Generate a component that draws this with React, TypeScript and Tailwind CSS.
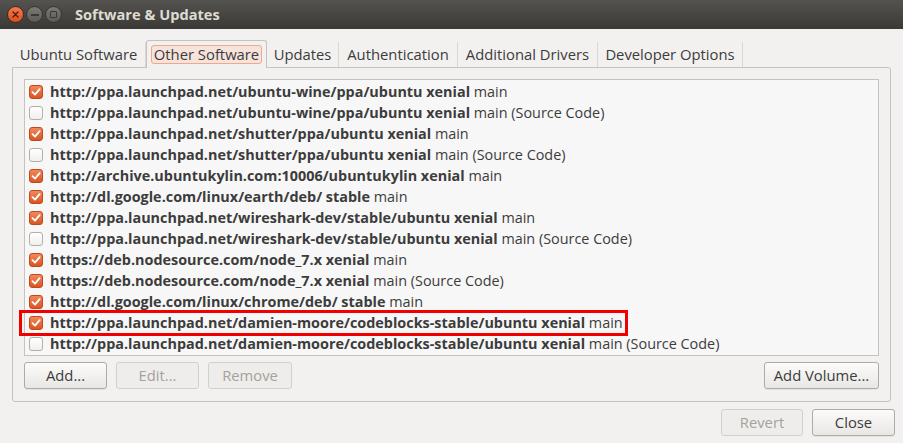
import React from 'react';

const sources: { url: string; extra: string; on: boolean; mark?: boolean }[] = [
  { url: 'http://ppa.launchpad.net/ubuntu-wine/ppa/ubuntu xenial', extra: 'main', on: true },
  { url: 'http://ppa.launchpad.net/ubuntu-wine/ppa/ubuntu xenial', extra: 'main (Source Code)', on: false },
  { url: 'http://ppa.launchpad.net/shutter/ppa/ubuntu xenial', extra: 'main', on: true },
  { url: 'http://ppa.launchpad.net/shutter/ppa/ubuntu xenial', extra: 'main (Source Code)', on: false },
  { url: 'http://archive.ubuntukylin.com:10006/ubuntukylin xenial', extra: 'main', on: true },
  { url: 'http://dl.google.com/linux/earth/deb/ stable', extra: 'main', on: true },
  { url: 'http://ppa.launchpad.net/wireshark-dev/stable/ubuntu xenial', extra: 'main', on: true },
  { url: 'http://ppa.launchpad.net/wireshark-dev/stable/ubuntu xenial', extra: 'main (Source Code)', on: false },
  { url: 'https://deb.nodesource.com/node_7.x xenial', extra: 'main', on: true },
  { url: 'https://deb.nodesource.com/node_7.x xenial', extra: 'main (Source Code)', on: true },
  { url: 'http://dl.google.com/linux/chrome/deb/ stable', extra: 'main', on: true },
  { url: 'http://ppa.launchpad.net/damien-moore/codeblocks-stable/ubuntu xenial', extra: 'main', on: true, mark: true },
  { url: 'http://ppa.launchpad.net/damien-moore/codeblocks-stable/ubuntu xenial', extra: 'main (Source Code)', on: false },
];

const tabs = [
  { label: 'Ubuntu Software', w: 'w-[134px]' },
  { label: 'Other Software', w: 'w-[121px]', active: true },
  { label: 'Updates', w: 'w-[72px]' },
  { label: 'Authentication', w: 'w-[119px]' },
  { label: 'Additional Drivers', w: 'w-[140px]' },
  { label: 'Developer Options', w: 'w-[145px]' },
];

function CheckBox({ on }: { on: boolean }) {
  if (!on) {
    return <div className="w-[14px] h-[14px] shrink-0 rounded-[3px] border border-[#b3afa9] bg-gradient-to-b from-white to-[#f1efed]" />;
  }
  return (
    <div className="w-[14px] h-[14px] shrink-0 rounded-[3px] border border-[#c14a1c] bg-gradient-to-b from-[#f2875a] to-[#d9551f] flex items-center justify-center">
      <svg width="10" height="10" viewBox="0 0 10 10">
        <path d="M1.5 5.2 L4 7.6 L8.6 2.2" fill="none" stroke="white" strokeWidth="1.8" strokeLinecap="round" strokeLinejoin="round" />
      </svg>
    </div>
  );
}

function Button({ children, disabled, className }: { children: React.ReactNode; disabled?: boolean; className?: string }) {
  return (
    <div
      className={
        'h-[27px] flex items-center justify-center rounded-[3px] border text-[14.8px] ' +
        (disabled
          ? 'border-[#d3d0cb] bg-[#efedeb] text-[#a5a19b] '
          : 'border-[#aeaaa4] bg-gradient-to-b from-[#fbfbfa] to-[#e9e7e4] text-[#3c3c3c] shadow-[0_1px_0_rgba(0,0,0,0.05)] ') +
        (className ?? '')
      }
    >
      {children}
    </div>
  );
}

export default function App() {
  return (
    <div
      className="w-[903px] h-[443px] bg-[#f2f1f0] flex flex-col overflow-hidden text-[14.8px] text-[#3c3c3c]"
      style={{ fontFamily: '"Open Sans", "DejaVu Sans", sans-serif' }}
    >
      {/* title bar */}
      <div className="h-[29px] shrink-0 bg-gradient-to-b from-[#55534f] to-[#3a3935] flex items-center pl-[7px]">
        <div className="flex gap-[2px]">
          <div className="w-[17px] h-[17px] rounded-full bg-gradient-to-b from-[#f37a4c] to-[#e04d17] border border-[#3a2a22] flex items-center justify-center">
            <svg width="7" height="7" viewBox="0 0 7 7">
              <path d="M1 1 L6 6 M6 1 L1 6" stroke="#4a2010" strokeWidth="1.4" strokeLinecap="round" />
            </svg>
          </div>
          <div className="w-[17px] h-[17px] rounded-full bg-gradient-to-b from-[#7c7a75] to-[#5b5a55] border border-[#34332f] flex items-center justify-center">
            <div className="w-[8px] h-[2px] bg-[#3a3935]" />
          </div>
          <div className="w-[17px] h-[17px] rounded-full bg-gradient-to-b from-[#7c7a75] to-[#5b5a55] border border-[#34332f] flex items-center justify-center">
            <div className="w-[7px] h-[7px] border-[1.5px] border-[#3a3935] rounded-[1px]" />
          </div>
        </div>
        <div className="ml-[13px] text-[14.6px] font-bold text-[#dfdbd2]">Software &amp; Updates</div>
      </div>

      {/* notebook */}
      <div className="px-[12px] pt-[11px]">
        <div className="flex h-[27px] items-end">
          {tabs.map((t) =>
            t.active ? (
              <div
                key={t.label}
                className={t.w + ' h-[28px] -mb-px relative z-10 bg-[#f2f1f0] border border-b-0 border-[#c6c3be] rounded-t-[3px] flex items-center justify-center'}
              >
                <span className="px-[2px] h-[19px] leading-[17px] rounded-[3px] border border-[#eea88d] bg-[#f6e3db]">{t.label}</span>
              </div>
            ) : (
              <div key={t.label} className={t.w + ' h-[25px] flex items-center justify-center border-r border-[#dad7d2]'}>
                {t.label}
              </div>
            )
          )}
        </div>
        <div className="h-[335px] border border-[#c6c3be] rounded-b-[3px] rounded-tr-[3px] px-[11px] pt-[11px]">
          <div className="relative h-[277px] border border-[#c6c3be] bg-[#f7f7f7] pt-[1px] pl-[4px] text-[14.4px]">
            {sources.map((s, i) => (
              <div key={i} className="relative h-[21px] flex items-center gap-[7px] whitespace-nowrap">
                <CheckBox on={s.on} />
                <span>
                  <b className="font-bold">{s.url}</b> {s.extra}
                </span>
                {s.mark && (
                  <div className="absolute left-[-10px] top-[-2px] w-[609px] h-[26px] border-[3px] border-[#f20000]" />
                )}
              </div>
            ))}
          </div>
          <div className="flex mt-[6px] gap-[9px]">
            <Button className="w-[83px]">Add...</Button>
            <Button className="w-[83px]" disabled>Edit...</Button>
            <Button className="w-[84px]" disabled>Remove</Button>
            <Button className="w-[115px] ml-auto">Add Volume...</Button>
          </div>
        </div>
      </div>

      {/* dialog buttons */}
      <div className="flex justify-end gap-[9px] pr-[8px] mt-[7px]">
        <Button className="w-[82px]" disabled>Revert</Button>
        <Button className="w-[83px]">Close</Button>
      </div>
    </div>
  );
}
